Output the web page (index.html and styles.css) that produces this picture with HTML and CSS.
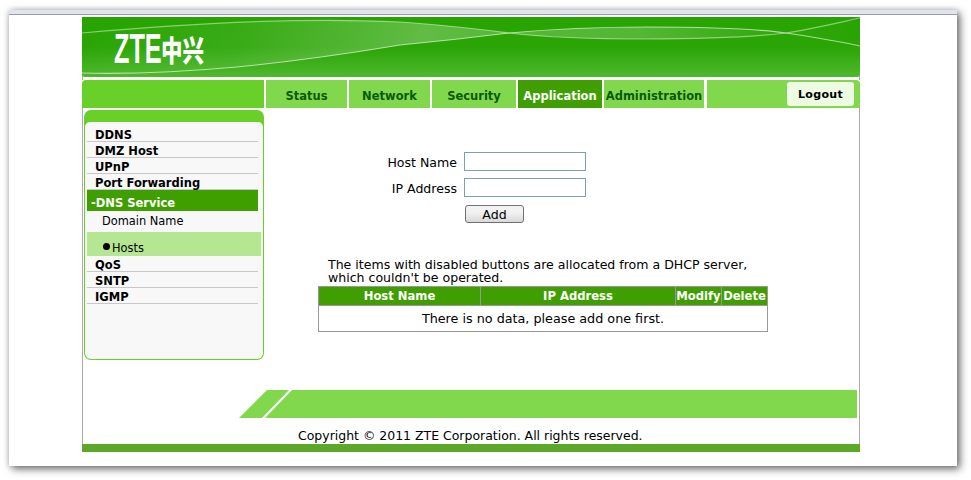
FILE: index.html
```html
<!DOCTYPE html>
<html lang="en">
<head>
<meta charset="utf-8">
<title>ZTE</title>
<link rel="stylesheet" href="styles.css">
</head>
<body>
<div class="window">
  <div class="chrome"></div>
  <div class="page">
    <header class="header">
      <svg class="swoosh" viewBox="0 0 778 60" width="778" height="60" aria-hidden="true">
        <defs>
          <linearGradient id="bg" x1="0" y1="0" x2="0" y2="1">
            <stop offset="0" stop-color="#28a400"/>
            <stop offset="0.5" stop-color="#2aa506"/>
            <stop offset="1" stop-color="#4fb82e"/>
          </linearGradient>
          <linearGradient id="sheen" x1="0" y1="0" x2="1" y2="0">
            <stop offset="0" stop-color="#fff" stop-opacity="0"/>
            <stop offset="0.2" stop-color="#fff" stop-opacity="0.07"/>
            <stop offset="0.44" stop-color="#fff" stop-opacity="0.26"/>
            <stop offset="0.55" stop-color="#fff" stop-opacity="0.2"/>
            <stop offset="0.72" stop-color="#fff" stop-opacity="0.2"/>
            <stop offset="0.9" stop-color="#fff" stop-opacity="0.03"/>
            <stop offset="1" stop-color="#fff" stop-opacity="0"/>
          </linearGradient>
        </defs>
        <rect width="778" height="60" fill="url(#bg)"/>
        <path d="M0 16 C100 7 220 0 318 5 C365 8 395 12 427 16 C470 21 520 22 565 22 C620 22 670 20 704 16 C730 12 755 6 778 1 L778 29 C755 24 730 20 704 16 C670 11 620 10 565 10 C520 10 470 12 427 16 C395 20 360 24 318 28 C270 36 215 44 155 50 C100 55 45 57 0 56 Z" fill="url(#sheen)"/>
        <path d="M0 16 C100 7 220 0 318 5 C365 8 395 12 427 16 C470 21 520 22 565 22 C620 22 670 20 704 16 C730 12 755 6 778 1" fill="none" stroke="#ffffff" stroke-opacity="0.45" stroke-width="1.2"/>
        <path d="M0 56 C45 57 100 55 155 50 C215 44 270 36 318 28 C360 24 395 20 427 16 C470 12 520 10 565 10 C620 10 670 11 704 16 C730 20 755 24 778 29" fill="none" stroke="#ffffff" stroke-opacity="0.6" stroke-width="1.2"/>
      </svg>
      <div class="logo"><span class="logo-latin">ZTE</span><span class="logo-cjk">中兴</span></div>
    </header>
    <nav class="nav">
      <div class="nav-side"></div>
      <a class="tab tab-status">Status</a>
      <a class="tab tab-network">Network</a>
      <a class="tab tab-security">Security</a>
      <a class="tab tab-app active">Application</a>
      <a class="tab tab-admin">Administration</a>
      <div class="nav-rest"><button class="logout" type="button">Logout</button></div>
    </nav>
    <div class="body">
      <aside class="side">
        <div class="panel">
          <div class="item">DDNS</div>
          <div class="item">DMZ Host</div>
          <div class="item">UPnP</div>
          <div class="item">Port Forwarding</div>
          <div class="section">-DNS Service</div>
          <div class="sub">Domain Name</div>
          <div class="sub-active"><span class="dot"></span>Hosts</div>
          <div class="item">QoS</div>
          <div class="item">SNTP</div>
          <div class="item">IGMP</div>
        </div>
      </aside>
      <main class="main">
        <form class="form">
          <label class="label">Host Name</label><input class="field" type="text">
          <label class="label">IP Address</label><input class="field" type="text">
          <span></span><button class="add" type="button">Add</button>
        </form>
        <p class="note">The items with disabled buttons are allocated from a DHCP server,<br>which couldn't be operated.</p>
        <table class="data">
          <thead>
            <tr><th class="c1">Host Name</th><th class="c2">IP Address</th><th class="c3">Modify</th><th class="c4">Delete</th></tr>
          </thead>
          <tbody>
            <tr><td colspan="4">There is no data, please add one first.</td></tr>
          </tbody>
        </table>
      </main>
    </div>
    <div class="banner">
      <svg width="618" height="28" viewBox="0 0 618 28" aria-hidden="true">
        <polygon points="0,28 28,0 50,0 23,28" fill="#82d84d"/>
        <polygon points="26,28 53,0 618,0 618,28" fill="#82d84d"/>
      </svg>
    </div>
    <div class="copy">Copyright © 2011 ZTE Corporation. All rights reserved.</div>
    <div class="foot"></div>
  </div>
</div>
</body>
</html>
```
FILE: styles.css
```css
* { box-sizing: border-box; }
html, body { margin: 0; padding: 0; }
body {
  width: 971px;
  height: 480px;
  overflow: hidden;
  background: #fff;
  font-family: "DejaVu Sans", Verdana, sans-serif;
  font-size: 12.55px;
  color: #000;
}
.window {
  margin: 10px 0 0 9px;
  width: 948px;
  height: 456px;
  background: #fff;
  box-shadow: 3px 3px 8px rgba(0, 0, 0, 0.55), 0 0 6px rgba(0, 0, 0, 0.2);
}
.chrome {
  height: 5px;
  background: #dfe4f0;
  border-bottom: 1px solid #9a9eaa;
}
.page {
  margin: 2px 0 0 73px;
  width: 778px;
  border-left: 1px solid #aaa;
  border-right: 1px solid #aaa;
  display: flex;
  flex-direction: column;
}
.header {
  position: relative;
  height: 60px;
  margin: 0 -1px;
  border-radius: 0 0 3px 3px;
  overflow: hidden;
}
.swoosh { display: block; }
.logo {
  position: absolute;
  left: 32px;
  top: 15px;
  height: 34px;
  color: #fff;
  white-space: nowrap;
}
.logo-latin {
  position: absolute;
  left: 0;
  top: 0;
  font: bold 42px/34px "Liberation Sans", sans-serif;
  transform: scaleX(0.6);
  transform-origin: 0 0;
}
.logo-cjk {
  position: absolute;
  left: 47px;
  top: 0;
  font: 900 29px/34px "Noto Sans CJK SC", sans-serif;
  transform: scaleX(0.74);
  transform-origin: 0 0;
}
.nav {
  display: flex;
  height: 28px;
  margin: 3px -1px 0;
  background: #fff;
}
.nav-side {
  width: 182px;
  margin-right: 2px;
  background: #69d02a;
  border-radius: 4px 0 0 0;
}
.tab {
  display: flex;
  align-items: center;
  justify-content: center;
  margin-right: 2px;
  background: #82d84d;
  color: #0b5a0b;
  font-weight: bold;
  font-size: 11.5px;
  white-space: nowrap;
  padding-top: 3px;
}
.tab-status { width: 81px; }
.tab-network { width: 81px; }
.tab-security { width: 84px; }
.tab-app { width: 84px; }
.tab-admin { width: 100px; margin-right: 3px; }
.tab.active { background: #3f9f00; color: #fff; }
.nav-rest {
  flex: 1;
  display: flex;
  justify-content: flex-end;
  align-items: center;
  padding-right: 6px;
  background: #82d84d;
  border-radius: 0 4px 0 0;
}
.logout {
  width: 67px;
  height: 24px;
  padding: 0;
  border: 0;
  border-radius: 3px;
  background: #edfbe3;
  color: #000;
  font: bold 11px "DejaVu Sans", Verdana, sans-serif;
  letter-spacing: 0.3px;
}
.body {
  display: flex;
  height: 282px;
  padding: 2px 0 0 1px;
}
.side {
  width: 180px;
  height: 250px;
  background: #69d02a;
  border-radius: 7px;
  padding: 12px 1px 1px;
}
.panel {
  height: 237px;
  background: #f8f8f8;
  border-radius: 5px 5px 6px 6px;
  padding: 4px 0 0 2px;
}
.item {
  width: 171px;
  height: 16px;
  padding: 1px 0 0 8px;
  border-bottom: 1px solid #c8c8c8;
  font-size: 11.5px;
  font-weight: bold;
  line-height: 16px;
  white-space: nowrap;
}
.section {
  width: 171px;
  height: 21px;
  background: #3f9f00;
  color: #fff;
  font-size: 11.5px;
  font-weight: bold;
  line-height: 27px;
  padding-left: 4px;
}
.sub {
  height: 21px;
  padding-left: 15px;
  font-size: 11.4px;
  line-height: 20px;
}
.sub-active {
  width: 174px;
  height: 24px;
  background: #b5e793;
  padding: 8px 0 0 16px;
  font-size: 11.4px;
  line-height: 16px;
  display: flex;
}
.dot {
  width: 7px;
  height: 7px;
  margin: 3px 2px 0 0;
  border-radius: 50%;
  background: #000;
}
.main {
  flex: 1;
  padding: 42px 0 0 54px;
  min-width: 0;
}
.form {
  display: grid;
  grid-template-columns: 139px 122px;
  grid-auto-rows: 19px;
  column-gap: 7px;
  row-gap: 7px;
  margin: 0;
  align-items: center;
}
.label {
  text-align: right;
  line-height: 19px;
  padding-top: 1px;
  white-space: nowrap;
}
.field {
  width: 122px;
  height: 19px;
  padding: 0;
  background: #fff;
  border: 1px solid #7f9db9;
}
.add {
  margin: 1px 0 0 1px;
  width: 59px;
  height: 18px;
  padding: 0;
  background: linear-gradient(#f4f4f4, #f0f0f0 45%, #d8d8d8);
  border: 1px solid #707070;
  border-radius: 3px;
  color: #000;
  font: 12.55px "DejaVu Sans", Verdana, sans-serif;
}
.note {
  margin: 35px 0 0 10px;
  line-height: 13px;
  white-space: nowrap;
  width: 440px;
}
.data {
  margin-top: 2px;
  width: 449px;
  height: 46px;
  border-collapse: collapse;
  table-layout: fixed;
}
.data th {
  height: 19px;
  padding: 0;
  background: #3f9f00;
  color: #fff;
  font-size: 11.6px;
  font-weight: bold;
  border: 1px solid #999;
  white-space: nowrap;
}
.c1 { width: 162px; }
.c2 { width: 195px; }
.c3 { width: 46px; }
.c4 { width: 46px; }
.data td {
  padding: 0;
  text-align: center;
  font-size: 12.75px;
  border: 1px solid #999;
  white-space: nowrap;
}
.banner {
  height: 28px;
  padding-left: 156px;
}
.banner svg { display: block; }
.copy {
  height: 26px;
  padding: 11px 0 0 215px;
  font-size: 12.48px;
  line-height: 14px;
  white-space: nowrap;
}
.foot {
  height: 8px;
  margin: 0 -1px;
  background: #5ca829;
}
```
